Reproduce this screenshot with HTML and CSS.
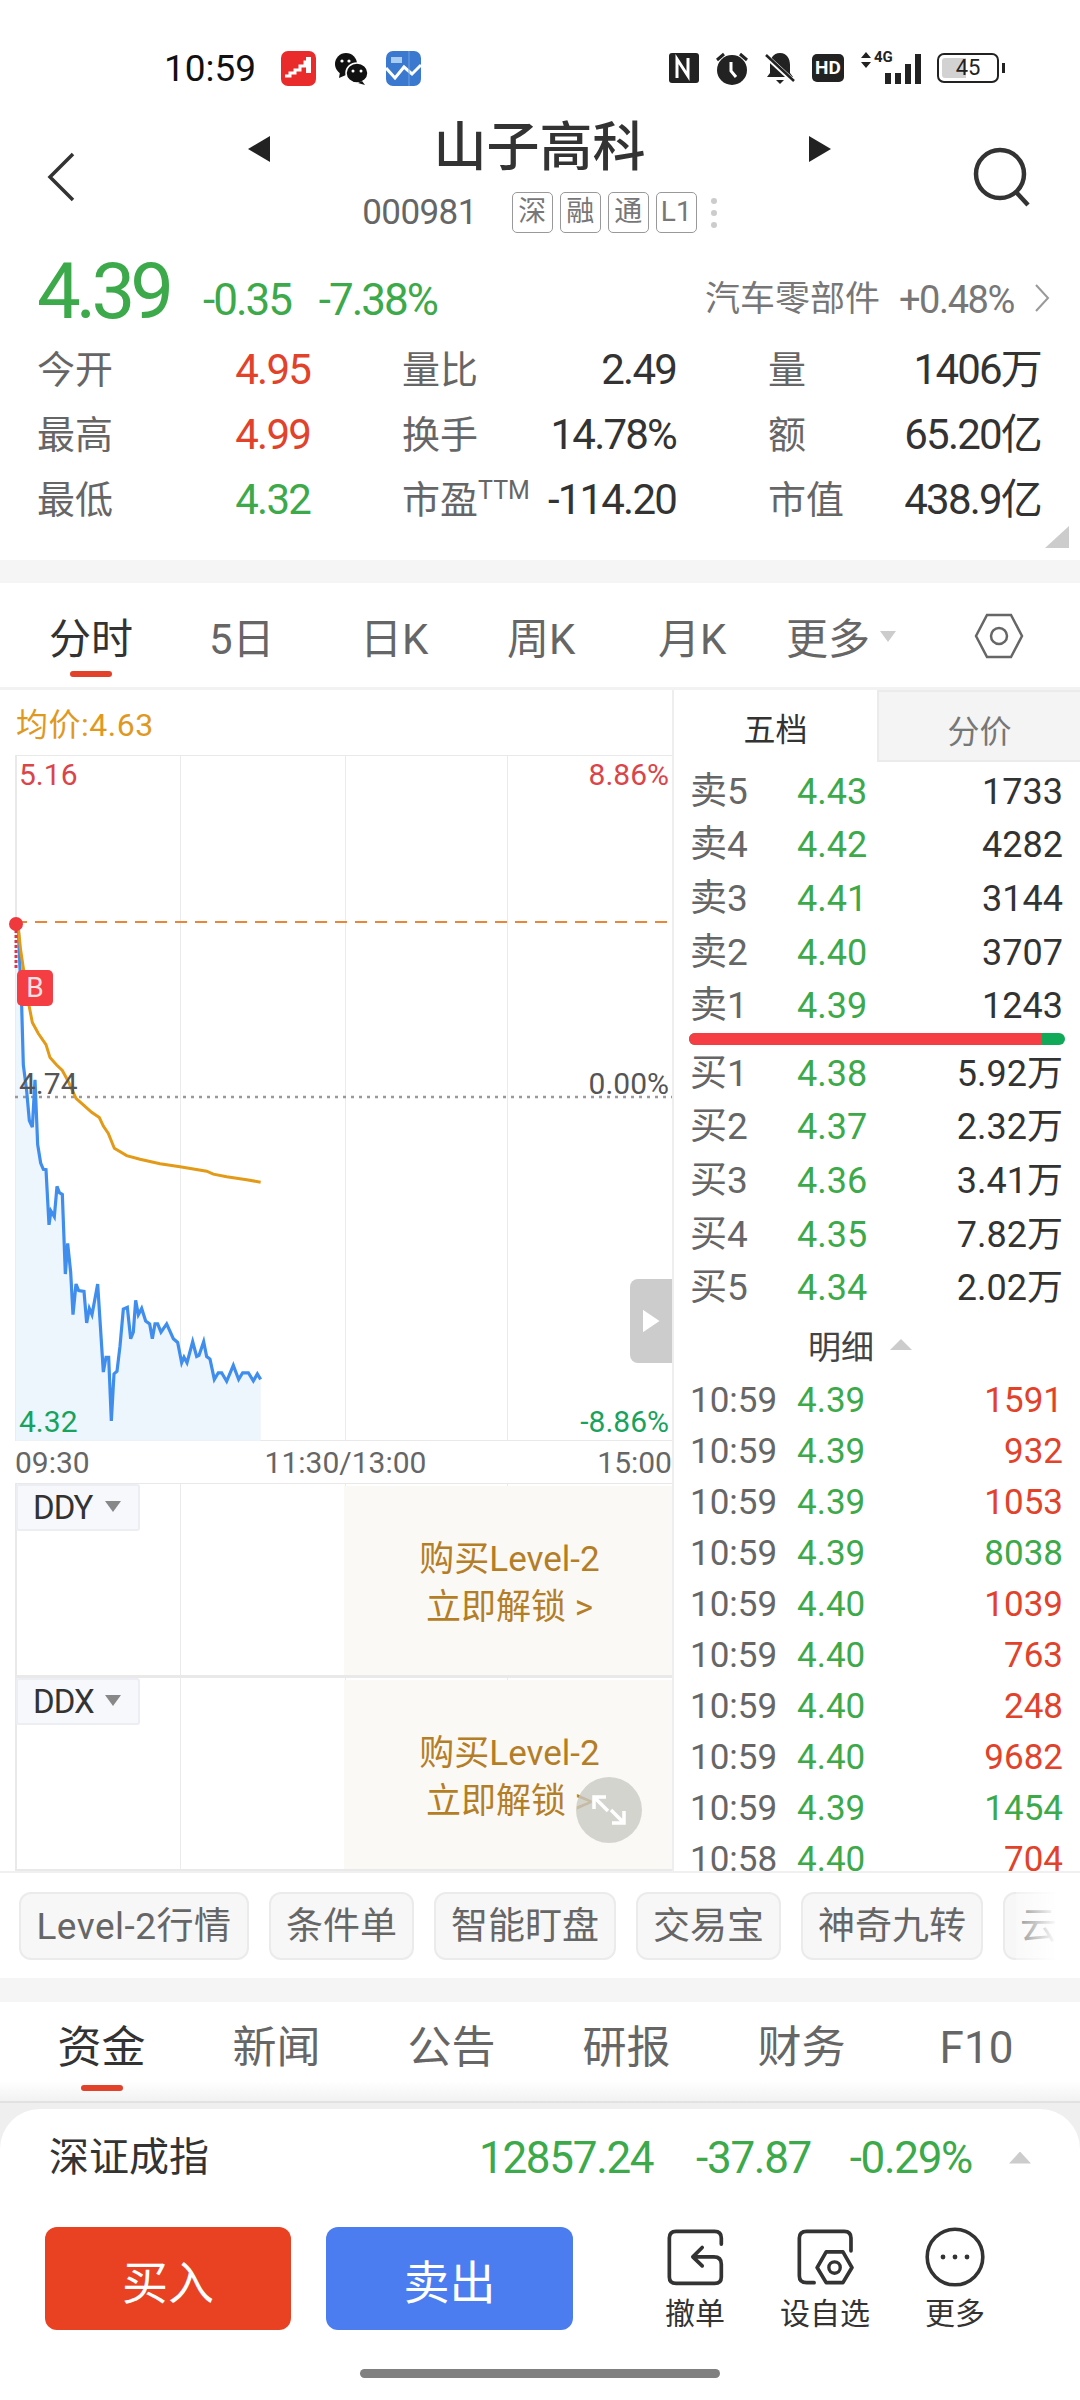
FILE: index.html
```html
<!DOCTYPE html>
<html lang="zh-CN">

<head>
    <meta charset="UTF-8">
    <meta name="viewport" content="width=device-width, initial-scale=1.0">
    <title>山子高科</title>
    <link rel="stylesheet" href="styles.css">
</head>

<body>

    <!-- Status bar -->
    <div class="status">
        <span class="clock">10:59</span>
        <svg class="app" width="35" height="35" viewBox="0 0 35 35">
            <rect width="35" height="35" rx="7" fill="#e92b2b"/>
            <path d="M4 25h5v-3h5v-3h5v-4h5v-4h5" stroke="#fff" stroke-width="3" fill="none"/>
            <rect x="25" y="6" width="5" height="16" fill="#fff"/>
        </svg>
        <svg class="app wechat" width="34" height="35" viewBox="0 0 34 35">
            <ellipse cx="12" cy="13" rx="11" ry="11" fill="#111"/>
            <path d="M6 21l-1 6 7-3z" fill="#111"/>
            <ellipse cx="23" cy="22" rx="11" ry="10" fill="#111" stroke="#fff" stroke-width="1.5"/>
            <path d="M28 30l3 4-7-2z" fill="#111"/>
            <circle cx="8" cy="10" r="1.6" fill="#fff"/><circle cx="15" cy="10" r="1.6" fill="#fff"/>
            <circle cx="19" cy="20" r="1.5" fill="#fff"/><circle cx="27" cy="20" r="1.5" fill="#fff"/>
        </svg>
        <svg class="app" width="35" height="35" viewBox="0 0 35 35">
            <rect width="35" height="35" rx="7" fill="#3b78cf"/>
            <path d="M0 17l9 10 9-11 8 7 9-9" stroke="#fff" stroke-width="3" fill="none"/>
            <path d="M5 6h11v6H5z" fill="#a9cdf2"/>
            <path d="M23 0v35" stroke="#6ea2e0" stroke-width="1"/>
        </svg>

        <div class="status-right">
            <svg width="30" height="30" viewBox="0 0 30 30">
                <rect width="30" height="30" rx="3" fill="#222"/>
                <path d="M8 25V6l11 17V5" stroke="#fff" stroke-width="3" fill="none"/>
            </svg>
            <svg width="32" height="34" viewBox="0 0 32 34">
                <circle cx="16" cy="19" r="15" fill="#222"/>
                <path d="M1 9l7-6M31 9l-7-6" stroke="#222" stroke-width="3"/>
                <path d="M15 11v9l5 6" stroke="#fff" stroke-width="3" fill="none"/>
            </svg>
            <svg width="30" height="32" viewBox="0 0 30 32">
                <path d="M15 1c-7 0-10 6-10 12v8l-3 4h26l-3-4v-8c0-6-3-12-10-12z" fill="#222"/>
                <path d="M11 28h8l-4 4z" fill="#222"/>
                <path d="M1 4l28 26" stroke="#fff" stroke-width="5"/>
                <path d="M1 3l28 26" stroke="#222" stroke-width="2.5"/>
            </svg>
            <span class="hd">HD</span>
            <div class="signal">
                <svg class="updown" width="10" height="16" viewBox="0 0 10 16">
                    <path d="M5 0l5 6H0zM5 16l5-6H0z" fill="#222"/>
                </svg>
                <span class="four-g">4G</span>
                <i class="sig s1"></i><i class="sig s2"></i><i class="sig s3"></i><i class="sig s4"></i>
            </div>
            <div class="battery"><span class="level"></span><span class="pct">45</span></div>
        </div>
    </div>

    <!-- Title -->
    <nav class="nav">
        <svg width="28" height="50" viewBox="0 0 28 50">
            <path d="M26 2L3 25l23 23" stroke="#333" stroke-width="3.5" fill="none"/>
        </svg>
        <div class="nav-mid">
            <div class="title-row">
                <svg width="22" height="26" viewBox="0 0 22 26"><path d="M22 0v26L0 13z" fill="#222"/></svg>
                <h1>山子高科</h1>
                <svg width="22" height="26" viewBox="0 0 22 26"><path d="M0 0v26l22-13z" fill="#222"/></svg>
            </div>
            <div class="code-row">
                <span class="code">000981</span>
                <span class="badge">深</span>
                <span class="badge">融</span>
                <span class="badge">通</span>
                <span class="badge">L1</span>
                <span class="dots"><i></i><i></i><i></i></span>
            </div>
        </div>
        <svg width="58" height="60" viewBox="0 0 58 60">
            <circle cx="27" cy="27" r="24" stroke="#333" stroke-width="4.5" fill="none"/>
            <path d="M43 45l12 13" stroke="#333" stroke-width="4.5"/>
        </svg>
    </nav>

    <!-- Quote -->
    <div class="quote">
        <span class="price">4.39</span>
        <span class="change c1">-0.35</span>
        <span class="change c2">-7.38%</span>
        <span class="sector">汽车零部件</span>
        <span class="sector-pct">+0.48%</span>
        <svg width="16" height="28" viewBox="0 0 16 28">
            <path d="M2 1l12 13L2 27" stroke="#999" stroke-width="2" fill="none"/>
        </svg>
    </div>

    <div class="stats">
        <div class="stat"><span>今开</span><b class="red">4.95</b></div>
        <div class="stat"><span>量比</span><b>2.49</b></div>
        <div class="stat"><span>量</span><b>1406万</b></div>
        <div class="stat"><span>最高</span><b class="red">4.99</b></div>
        <div class="stat"><span>换手</span><b>14.78%</b></div>
        <div class="stat"><span>额</span><b>65.20亿</b></div>
        <div class="stat"><span>最低</span><b class="green">4.32</b></div>
        <div class="stat"><span>市盈<sup>TTM</sup></span><b>-114.20</b></div>
        <div class="stat"><span>市值</span><b>438.9亿</b></div>
        <span class="corner"></span>
    </div>

    <div class="band"></div>

    <!-- Period tabs -->
    <div class="periods">
        <a class="active">分时</a>
        <a>5日</a>
        <a>日K</a>
        <a>周K</a>
        <a>月K</a>
        <a class="more">更多<i></i></a>
        <svg class="hex" width="50" height="46" viewBox="0 0 50 46">
            <path d="M13 2h24l11 21-11 21H13L2 23z" stroke="#666" stroke-width="2.5" fill="none"/>
            <circle cx="25" cy="23" r="8" stroke="#666" stroke-width="2.5" fill="none"/>
        </svg>
    </div>

    <div class="main">
        <!-- Chart side -->
        <div class="left">
            <div class="avg">均价:4.63</div>

            <div class="chart">
                <div class="vlines"><i></i><i></i><i></i><i></i></div>
                <svg class="plot" width="657" height="686" viewBox="0 0 657 686">
                    <g transform="translate(-15,125) scale(0.33333,0.36996)">
                        <polygon class="area" points="47,1516 47,130 55,130 60,240 65,340 70,500 80,570 88,650 97,668 105,540 113,715 122,765 130,782 138,783 147,932 153,895 163,910 171,828 178,845 187,850 196,1065 203,982 212,1060 219,1175 228,1092 236,1110 252,1112 260,1197 268,1158 276,1175 293,1092 310,1330 318,1290 326,1290 334,1462 342,1335 351,1328 360,1260 370,1160 382,1155 392,1240 400,1222 407,1136 415,1175 425,1158 437,1192 449,1200 457,1240 465,1200 473,1200 483,1222 500,1200 520,1240 533,1250 545,1305 552,1290 561,1305 578,1248 590,1288 597,1285 611,1248 620,1288 630,1295 643,1350 655,1332 665,1332 680,1355 700,1312 716,1350 728,1332 745,1332 760,1354 772,1335 782,1350 782,1516"/>
                    </g>
                    <line class="dash" x1="0" y1="167" x2="657" y2="167"/>
                    <line class="dot-line" x1="0" y1="342" x2="657" y2="342"/>
                    <g transform="translate(-15,125) scale(0.33333,0.36996)">
                        <polyline class="blue" points="55,130 60,240 65,340 70,500 80,570 88,650 97,668 105,540 113,715 122,765 130,782 138,783 147,932 153,895 163,910 171,828 178,845 187,850 196,1065 203,982 212,1060 219,1175 228,1092 236,1110 252,1112 260,1197 268,1158 276,1175 293,1092 310,1330 318,1290 326,1290 334,1462 342,1335 351,1328 360,1260 370,1160 382,1155 392,1240 400,1222 407,1136 415,1175 425,1158 437,1192 449,1200 457,1240 465,1200 473,1200 483,1222 500,1200 520,1240 533,1250 545,1305 552,1290 561,1305 578,1248 590,1288 597,1285 611,1248 620,1288 630,1295 643,1350 655,1332 665,1332 680,1355 700,1312 716,1350 728,1332 745,1332 760,1354 772,1335 782,1350"/>
                        <polyline class="orange" points="55,130 62,190 72,250 85,330 97,385 115,415 138,445 150,480 170,500 187,515 205,545 228,590 250,608 275,628 298,642 310,665 325,685 343,725 380,745 420,755 480,767 540,775 620,787 640,795 680,802 740,810 782,817"/>
                    </g>
                    <line class="mark-line" x1="1" y1="175" x2="1" y2="215"/>
                    <circle cx="1" cy="169" r="7" fill="#f0393d"/>
                </svg>
                <span class="lb tl red2">5.16</span>
                <span class="lb tr red2">8.86%</span>
                <span class="lb ml">4.74</span>
                <span class="lb mr">0.00%</span>
                <span class="lb bl green2">4.32</span>
                <span class="lb br green2">-8.86%</span>
                <span class="mark">B</span>
                <div class="handle"><i></i></div>
            </div>

            <div class="axis"><span>09:30</span><span>11:30/13:00</span><span>15:00</span></div>

            <div class="panel">
                <div class="vlines"><i></i><i></i><i></i><i></i></div>
                <div class="picker">DDY<i></i></div>
                <div class="lock">购买Level-2<br>立即解锁 &gt;</div>
            </div>
            <div class="panel">
                <div class="vlines"><i></i><i></i><i></i><i></i></div>
                <div class="picker">DDX<i></i></div>
                <div class="lock">购买Level-2<br>立即解锁 &gt;</div>
            </div>

            <svg class="expand" width="66" height="66" viewBox="0 0 66 66">
                <circle cx="33" cy="33" r="33" fill="#cacac6" fill-opacity="0.8"/>
                <path d="M18 32V20h12M19 21l13 13M48 34v12H36M47 45L35 33" stroke="#fff" stroke-width="3.5" fill="none"/>
            </svg>
        </div>

        <!-- Order book -->
        <div class="right">
            <div class="book-tabs"><span class="on">五档</span><span>分价</span></div>

            <div class="level-row"><span>卖5</span><em>4.43</em><b>1733</b></div>
            <div class="level-row"><span>卖4</span><em>4.42</em><b>4282</b></div>
            <div class="level-row"><span>卖3</span><em>4.41</em><b>3144</b></div>
            <div class="level-row"><span>卖2</span><em>4.40</em><b>3707</b></div>
            <div class="level-row"><span>卖1</span><em>4.39</em><b>1243</b></div>
            <div class="ratio"><i></i></div>
            <div class="level-row"><span>买1</span><em>4.38</em><b>5.92万</b></div>
            <div class="level-row"><span>买2</span><em>4.37</em><b>2.32万</b></div>
            <div class="level-row"><span>买3</span><em>4.36</em><b>3.41万</b></div>
            <div class="level-row"><span>买4</span><em>4.35</em><b>7.82万</b></div>
            <div class="level-row"><span>买5</span><em>4.34</em><b>2.02万</b></div>

            <div class="detail-head">明细<i></i></div>

            <div class="tick"><span>10:59</span><em>4.39</em><b class="red">1591</b></div>
            <div class="tick"><span>10:59</span><em>4.39</em><b class="red">932</b></div>
            <div class="tick"><span>10:59</span><em>4.39</em><b class="red">1053</b></div>
            <div class="tick"><span>10:59</span><em>4.39</em><b class="green">8038</b></div>
            <div class="tick"><span>10:59</span><em>4.40</em><b class="red">1039</b></div>
            <div class="tick"><span>10:59</span><em>4.40</em><b class="red">763</b></div>
            <div class="tick"><span>10:59</span><em>4.40</em><b class="red">248</b></div>
            <div class="tick"><span>10:59</span><em>4.40</em><b class="red">9682</b></div>
            <div class="tick"><span>10:59</span><em>4.39</em><b class="green">1454</b></div>
            <div class="tick"><span>10:58</span><em>4.40</em><b class="red">704</b></div>
        </div>
    </div>

    <!-- Tool chips -->
    <div class="chips">
        <span class="chip wide">Level-2行情</span>
        <span class="chip">条件单</span>
        <span class="chip">智能盯盘</span>
        <span class="chip">交易宝</span>
        <span class="chip">神奇九转</span>
        <span class="chip">云条件</span>
    </div>

    <div class="band small"></div>

    <div class="news-tabs">
        <a class="active">资金</a>
        <a>新闻</a>
        <a>公告</a>
        <a>研报</a>
        <a>财务</a>
        <a>F10</a>
    </div>

    <!-- Bottom sheet -->
    <div class="sheet-wrap">
        <div class="sheet">
            <div class="index-row">
                <span class="index-name">深证成指</span>
                <span class="index-val v1">12857.24</span>
                <span class="index-val v2">-37.87</span>
                <span class="index-val v3">-0.29%</span>
                <i class="index-up"></i>
            </div>
            <div class="actions">
                <button class="trade buy">买入</button>
                <button class="trade sell">卖出</button>
                <div class="tool">
                    <svg class="sq" width="57" height="57" viewBox="110 60 170 170">
                        <path d="M272 105V87q0-20-20-20H137q-20 0-20 20v116q0 19 20 19h115q20 0 20-19v-38q0-22-22-22h-60M215 115l-28 28 28 27" fill="none" stroke="#333" stroke-width="11" stroke-linecap="round" stroke-linejoin="round"/>
                    </svg>
                    <span>撤单</span>
                </div>
                <div class="tool">
                    <svg class="sq" width="57" height="57" viewBox="503 60 170 170">
                        <path d="M664 125V87q0-20-20-20H532q-22 0-22 20v113q0 20 22 20h22" fill="none" stroke="#333" stroke-width="11" stroke-linecap="round"/>
                        <path d="M590 128h50l27 47-27 45h-50l-27-45z" fill="none" stroke="#333" stroke-width="11" stroke-linejoin="round"/>
                        <circle cx="615" cy="175" r="17" fill="none" stroke="#333" stroke-width="10"/>
                    </svg>
                    <span>设自选</span>
                </div>
                <div class="tool">
                    <svg width="60" height="60" viewBox="-30 -30 60 60">
                        <circle r="27.8" fill="none" stroke="#333" stroke-width="3.6"/>
                        <circle cx="-12" r="2.4" fill="#333"/><circle r="2.4" fill="#333"/><circle cx="12" r="2.4" fill="#333"/>
                    </svg>
                    <span>更多</span>
                </div>
            </div>
            <div class="home-bar"></div>
        </div>
    </div>

</body>

</html>
```

FILE: styles.css
```css
/* Reset */
* {
    margin: 0;
    padding: 0;
    box-sizing: border-box;
}

body {
    width: 1080px;
    height: 2400px;
    overflow: hidden;
    display: flex;
    flex-direction: column;
    background-color: #fff;
    color: #333;
    font-family: Roboto, "Noto Sans CJK SC", sans-serif;
}

i, em {
    font-style: normal;
}

b {
    font-weight: 400;
}

.red { color: #e2412a; }
.green { color: #3ca94a; }

/* Status bar */
.status {
    height: 100px;
    display: flex;
    align-items: center;
    padding: 36px 81px 0 164px;
}

.clock {
    font-size: 37px;
    color: #111;
    width: 117px;
}

.app {
    margin-right: 18px;
}

.status-right {
    margin-left: auto;
    display: flex;
    align-items: center;
    gap: 17px;
}

.hd {
    width: 32px;
    height: 28px;
    background-color: #222;
    border-radius: 5px;
    color: #fff;
    font-size: 19px;
    font-weight: 700;
    line-height: 28px;
    text-align: center;
}

.signal {
    position: relative;
    width: 60px;
    height: 32px;
    display: flex;
    align-items: flex-end;
    justify-content: flex-end;
    gap: 4px;
}

.updown {
    position: absolute;
    left: 0;
    top: 0;
}

.four-g {
    position: absolute;
    left: 13px;
    top: -4px;
    font-size: 15px;
    font-weight: 700;
    color: #222;
}

.sig {
    width: 6px;
    background-color: #222;
}

.s1 { height: 11px; }
.s2 { height: 11px; }
.s3 { height: 20px; }
.s4 { height: 30px; }

.battery {
    position: relative;
    width: 62px;
    height: 30px;
    margin-left: -1px;
    border: 2px solid #222;
    border-radius: 7px;
    text-align: center;
    font-size: 22px;
    line-height: 26px;
    color: #222;
}

.battery::after {
    content: "";
    position: absolute;
    right: -8px;
    top: 8px;
    width: 3px;
    height: 10px;
    background-color: #222;
}

.level {
    position: absolute;
    left: 3px;
    top: 3px;
    bottom: 3px;
    width: 24px;
    background-color: #d2d2d2;
    border-radius: 3px 0 0 3px;
}

.pct {
    position: relative;
}

/* Title */
.nav {
    height: 145px;
    display: flex;
    justify-content: space-between;
    align-items: flex-start;
    padding: 0 49px 0 47px;
}

.nav > svg:first-child {
    margin-top: 52px;
}

.nav > svg:last-child {
    margin-top: 47px;
}

.nav-mid {
    width: 583px;
    margin-left: 31px;
}

.title-row {
    height: 92px;
    display: flex;
    justify-content: space-between;
    align-items: center;
}

.title-row svg {
    margin-top: 5px;
}

.title-row h1 {
    font-size: 53px;
    font-weight: 500;
    color: #333;
    margin-top: -6px;
}

.code-row {
    display: flex;
    align-items: center;
    justify-content: center;
    gap: 7px;
}

.code {
    font-size: 35px;
    letter-spacing: -0.6px;
    color: #666;
    margin-right: 28px;
}

.badge {
    width: 41px;
    height: 41px;
    border: 1.5px solid #999;
    border-radius: 5px;
    font-size: 28px;
    line-height: 37px;
    text-align: center;
    color: #777;
}

.dots {
    width: 6px;
    margin-left: 7px;
    display: flex;
    flex-direction: column;
    gap: 6px;
}

.dots i {
    height: 6px;
    border-radius: 50%;
    background-color: #ccc;
}

/* Quote */
.quote {
    height: 90px;
    display: flex;
    align-items: center;
    padding: 0 30px 0 37px;
    color: #3ca94a;
}

.price {
    width: 156px;
    font-size: 78px;
    letter-spacing: -5px;
    margin-top: 2px;
}

.change {
    font-size: 44px;
    letter-spacing: -2px;
    margin-top: 20px;
    text-align: right;
}

.c1 { width: 98px; }
.c2 { width: 124px; margin-left: 22px; }

.sector {
    margin-left: auto;
    margin-top: 20px;
    font-size: 35px;
    line-height: 44px;
    color: #777;
}

.sector-pct {
    margin: 20px 20px 0 19px;
    font-size: 38px;
    line-height: 44px;
    letter-spacing: -1.4px;
    color: #777;
}

.quote svg {
    margin-top: 16px;
}

.stats {
    position: relative;
    height: 195px;
    padding: 2px 38px 0 37px;
    display: grid;
    grid-template-columns: 273px 274px 273px;
    grid-auto-rows: 65px;
    column-gap: 92px;
    margin-bottom: 30px;
}

.stat {
    display: flex;
    justify-content: space-between;
    align-items: center;
    font-size: 38px;
    line-height: 48px;
    color: #666;
}

.stat b {
    font-size: 42px;
    line-height: 48px;
    letter-spacing: -1.8px;
    color: #333;
}

.stat b.red { color: #e2412a; }
.stat b.green { color: #3ca94a; }

.stat sup {
    font-size: 25px;
    line-height: 0;
    vertical-align: 14px;
}

.corner {
    position: absolute;
    right: 11px;
    bottom: -18px;
    width: 24px;
    height: 22px;
    background-color: #ccc;
    clip-path: polygon(100% 0, 100% 100%, 0 100%);
}

.band {
    height: 23px;
    background-color: #f5f5f5;
}

.band.small {
    height: 24px;
}

/* Period tabs */
.periods {
    position: relative;
    height: 107px;
    border-bottom: 3px solid #f2f2f2;
    font-size: 42px;
    color: #666;
}

.periods a {
    position: absolute;
    top: 22px;
}

.periods a:nth-child(1) { left: 49px; color: #333; }
.periods a:nth-child(2) { left: 209px; }
.periods a:nth-child(3) { left: 360px; }
.periods a:nth-child(4) { left: 507px; }
.periods a:nth-child(5) { left: 658px; }
.periods a:nth-child(6) { left: 786px; }

.periods a.active::after,
.news-tabs a.active::after {
    content: "";
    position: absolute;
    left: 50%;
    width: 42px;
    height: 6px;
    margin-left: -21px;
    border-radius: 3px;
    background-color: #e2412a;
}

.periods a.active::after {
    top: 66px;
}

.more i {
    position: absolute;
    left: 94px;
    top: 26px;
    width: 16px;
    height: 11px;
    background-color: #ccc;
    clip-path: polygon(0 0, 100% 0, 50% 100%);
}

.hex {
    position: absolute;
    left: 974px;
    top: 30px;
}

/* Main area */
.main {
    height: 1183px;
    display: flex;
    border-bottom: 2px solid #f0f0f0;
}

.left {
    position: relative;
    width: 674px;
    border-right: 2px solid #eee;
}

.avg {
    height: 65px;
    padding: 9px 0 0 16px;
    font-size: 32px;
    letter-spacing: 0.5px;
    color: #e0991f;
}

.chart {
    position: relative;
    height: 686px;
    margin-left: 15px;
    border: 1px solid #e9e9e9;
    border-width: 1px 0 1px 2px;
}

.vlines {
    position: absolute;
    inset: 0;
    display: grid;
    grid-template-columns: 164px 165px 162px 1fr;
}

.vlines i {
    border-right: 1px solid #e9ebed;
}

.vlines i:last-child {
    border-right: none;
}

.plot {
    position: absolute;
    left: -2px;
    top: -1px;
    overflow: visible;
}

.area {
    fill: #edf5fd;
}

.dash {
    stroke: #e8863a;
    stroke-width: 2;
    stroke-dasharray: 12 8;
}

.dot-line {
    stroke: #999;
    stroke-width: 2.5;
    stroke-dasharray: 3 5;
}

.blue,
.orange {
    fill: none;
    vector-effect: non-scaling-stroke;
}

.blue {
    stroke: #3f8eee;
    stroke-width: 3.2;
}

.orange {
    stroke: #e39a16;
    stroke-width: 3;
}

.mark-line {
    stroke: #d8384a;
    stroke-width: 3;
    stroke-dasharray: 3 2;
}

.mark {
    position: absolute;
    left: 0;
    top: 214px;
    width: 36px;
    height: 36px;
    background-color: #f43e43;
    border-radius: 5px;
    color: #fbe3e3;
    font-size: 28px;
    line-height: 36px;
    text-align: center;
}

.lb {
    position: absolute;
    font-size: 30px;
    line-height: 34px;
    color: #555;
}

.tl { left: 2px; top: 2px; }
.tr { right: 3px; top: 2px; }
.ml { left: 2px; top: 311px; }
.mr { right: 3px; top: 311px; }
.bl { left: 2px; top: 649px; }
.br { right: 3px; top: 649px; }

.lb.red2 { color: #db4449; }
.lb.green2 { color: #17a35e; }

.handle {
    position: absolute;
    right: 0;
    top: 523px;
    width: 42px;
    height: 84px;
    background-color: #ccc;
    border-radius: 8px 0 0 8px;
    display: flex;
    align-items: center;
    justify-content: center;
}

.handle i {
    width: 17px;
    height: 23px;
    background-color: #fff;
    clip-path: polygon(0 0, 100% 50%, 0 100%);
}

.axis {
    height: 42px;
    margin-left: 15px;
    display: flex;
    justify-content: space-between;
    align-items: center;
    font-size: 30px;
    color: #666;
}

.axis span:nth-child(2) {
    margin-left: 4px;
}

.panel {
    position: relative;
    height: 194px;
    margin-left: 15px;
    border: 1px solid #e9e9e9;
    border-width: 1px 0 2px 2px;
}

.picker {
    position: absolute;
    left: -1px;
    top: 0;
    width: 124px;
    height: 47px;
    padding-left: 15px;
    background-color: #f7f8fc;
    border: 2px solid #eceef3;
    border-radius: 3px;
    font-size: 33px;
    line-height: 43px;
    letter-spacing: -1px;
    color: #333;
}

.picker i {
    position: absolute;
    left: 87px;
    top: 15px;
    width: 16px;
    height: 11px;
    background-color: #888;
    clip-path: polygon(0 0, 100% 0, 50% 100%);
}

.lock {
    position: absolute;
    left: 327px;
    right: 0;
    top: 2px;
    bottom: 0;
    padding: 50px 0 0 3px;
    background-color: #faf9f5;
    font-size: 35px;
    line-height: 48px;
    text-align: center;
    color: #b47e27;
}

.expand {
    position: absolute;
    left: 576px;
    top: 1087px;
}

/* Order book */
.right {
    width: 406px;
    height: 1181px;
    overflow: hidden;
}

.book-tabs {
    height: 75px;
    display: flex;
    font-size: 32px;
}

.book-tabs span {
    width: 203px;
    padding-top: 14px;
    text-align: center;
    background-color: #f4f4f4;
    border: 2px solid #ebebeb;
    border-right: none;
    color: #777;
    height: 72px;
}

.book-tabs span.on {
    width: 203px;
    background-color: #fff;
    border: none;
    color: #333;
}

.level-row,
.tick {
    display: grid;
    grid-template-columns: 107px 1fr auto;
    align-items: center;
    padding: 0 17px 0 16px;
    font-size: 36px;
    line-height: 44px;
}

.level-row {
    height: 53.6px;
}

.tick {
    height: 51px;
    font-size: 35px;
}

.level-row span {
    font-size: 37px;
    color: #666;
}

.tick span {
    color: #666;
}

.level-row em,
.tick em {
    color: #3ca94a;
}

.ratio {
    height: 12px;
    margin: 0 15px 2px 15px;
    border-radius: 6px;
    overflow: hidden;
    background-color: #0fa958;
}

.ratio i {
    display: block;
    width: 353px;
    height: 12px;
    background-color: #f43e43;
}

.detail-head {
    position: relative;
    height: 61px;
    padding: 6px 0 0 134px;
    font-size: 33px;
    color: #444;
}

.detail-head i {
    position: absolute;
    left: 216px;
    top: 24px;
    width: 22px;
    height: 11px;
    background-color: #ccc;
    clip-path: polygon(50% 0, 100% 100%, 0 100%);
}

/* Tool chips */
.chips {
    position: relative;
    height: 105px;
    padding-left: 19px;
    display: flex;
    align-items: center;
    gap: 20px;
    overflow: hidden;
}

.chips::after {
    content: "";
    position: absolute;
    left: 1016px;
    right: 0;
    top: 0;
    bottom: 0;
    background: linear-gradient(to right, rgba(255, 255, 255, 0.3), #fff 65%);
}

.chip {
    flex: none;
    height: 68px;
    padding: 0 15px;
    background-color: #f7f7f7;
    border: 2px solid #ebebeb;
    border-radius: 12px;
    font-size: 37px;
    line-height: 66px;
    color: #666;
}

.chip.wide {
    width: 230px;
    text-align: center;
    padding: 0;
    letter-spacing: 0.5px;
}

/* News tabs */
.news-tabs {
    position: relative;
    height: 99px;
    padding-left: 14px;
    display: grid;
    grid-template-columns: repeat(6, 175px);
    font-size: 44px;
    line-height: 92px;
    text-align: center;
    color: #666;
    background: linear-gradient(to bottom, #fff 80%, #f2f2f2);
}

.news-tabs a {
    position: relative;
}

.news-tabs a.active {
    color: #333;
}

.news-tabs a.active::after {
    top: 83px;
}

/* Bottom sheet */
.sheet-wrap {
    flex: 1;
    padding-top: 6px;
    background-color: #efefef;
    border-top: 2px solid #e2e2e2;
}

.sheet {
    height: 100%;
    background-color: #fff;
    border-radius: 40px 40px 0 0;
}

.index-row {
    height: 97px;
    display: flex;
    align-items: center;
    padding: 0 49px 0 49px;
    color: #3ca94a;
}

.index-name {
    font-size: 40px;
    line-height: 48px;
    color: #333;
    margin-right: auto;
}

.index-val {
    font-size: 44px;
    line-height: 48px;
    letter-spacing: -1.3px;
    text-align: right;
}

.v1 { width: 174px; }
.v2 { width: 127px; margin-left: 31px; }
.v3 { width: 130px; margin-left: 31px; }

.index-up {
    width: 22px;
    height: 12px;
    margin-left: 37px;
    background-color: #ccc;
    clip-path: polygon(50% 0, 100% 100%, 0 100%);
}

.actions {
    height: 104px;
    margin-top: 21px;
    padding-left: 45px;
    display: flex;
}

.trade {
    width: 246px;
    height: 103px;
    border: none;
    border-radius: 12px;
    color: #fff;
    font-family: inherit;
    font-size: 46px;
}

.buy {
    background-color: #e84223;
    margin-right: 35px;
}

.sell {
    width: 247px;
    background-color: #4c7df0;
    margin-right: 57px;
}

.tool {
    width: 130px;
    display: flex;
    flex-direction: column;
    align-items: center;
    gap: 10px;
    font-size: 30px;
    line-height: 34px;
    color: #333;
}

.tool svg {
    flex: none;
}

.tool svg.sq {
    margin: 2px 0 1px;
}

.home-bar {
    width: 360px;
    height: 9px;
    margin: 38px auto 0;
    border-radius: 5px;
    background-color: #808080;
}
```
